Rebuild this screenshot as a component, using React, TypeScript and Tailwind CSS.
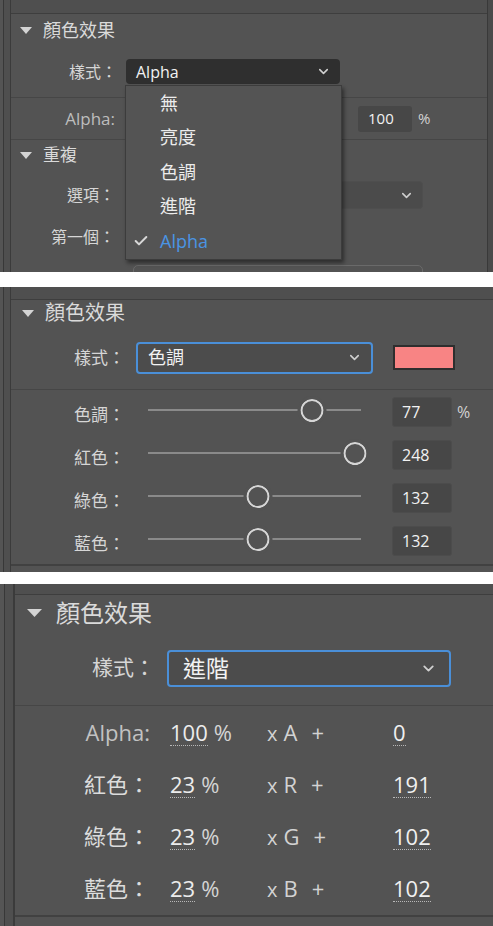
import { ChevronDown, Check } from 'lucide-react'

const font = "font-['Open_Sans','Noto_Sans_CJK_TC',sans-serif]"

function Triangle({ w = 12, h = 7 }: { w?: number; h?: number }) {
  return (
    <svg width={w} height={h} viewBox={`0 0 ${w} ${h}`} className="shrink-0">
      <polygon points={`0,0 ${w},0 ${w / 2},${h}`} fill="#d4d4d4" />
    </svg>
  )
}

function Slider({ value }: { value: number }) {
  return (
    <div className="relative h-[24px] w-[213px] shrink-0">
      <div className="absolute left-0 right-0 top-[9px] h-[2px] bg-[#8a8a8a]" />
      <div
        className="absolute top-[-1px] h-[23px] w-[23px] -translate-x-1/2 rounded-full border-[2.5px] border-[#d6d6d6] bg-[#535353] outline outline-[3px] outline-[#535353]"
        style={{ left: `${value}%` }}
      />
    </div>
  )
}

function SliderRow({ label, value, pct, unit }: { label: string; value: string; pct: number; unit?: string }) {
  return (
    <div className="flex h-[43px] items-center">
      <div className="w-[114px] pt-[6px] text-right text-[17px] text-[#d6d6d6]">{label}</div>
      <div className="ml-[23px]">
        <Slider value={pct} />
      </div>
      <div className="ml-[31px] flex h-[30px] w-[60px] items-center rounded-[3px] border border-[#4c4c4c] bg-[#474747] pl-[9px] text-[16px] font-medium text-[#f2f2f2]">
        {value}
      </div>
      {unit && <span className="ml-[5px] text-[16px] font-medium text-[#d2d2d2]">{unit}</span>}
    </div>
  )
}

function AdvRow({ label, pct, ch, value, dim }: { label: string; pct: string; ch: string; value: string; dim?: boolean }) {
  return (
    <div className="flex h-[52px] items-center text-[22px]">
      <div className={`w-[135px] text-right ${dim ? 'text-[#c2c2c2]' : 'text-[#dcdcdc]'}`}>{label}</div>
      <div className="ml-[20px] flex w-[97px] items-baseline gap-[6px] text-[#ececec]">
        <span className="border-b border-dotted border-[#b8b8b8] leading-[26px]">{pct}</span>
        <span className="text-[#d4d4d4]">%</span>
      </div>
      <div className="flex w-[126px] items-baseline text-[#d2d2d2]">
        <span className="text-[20px]">x</span>
        <span className="ml-[6px]">{ch}</span>
        <span className="ml-[14px]">+</span>
      </div>
      <span className="border-b border-dotted border-[#b8b8b8] leading-[26px] text-[#f0f0f0]">{value}</span>
    </div>
  )
}

export default function App() {
  return (
    <div className={`flex h-[926px] w-[493px] flex-col bg-white ${font}`}>
      {/* panel 1: alpha dropdown open */}
      <div className="relative flex h-[272px] shrink-0 overflow-hidden bg-[#4d4d4d]">
        <div className="w-[3px] bg-[#545454]" />
        <div className="w-px bg-[#383838]" />
        <div className="w-[6px] bg-[#4f4f4f]" />
        <div className="w-px bg-[#3b3b3b]" />
        <div className="flex flex-1 flex-col bg-[#535353]">
          <div className="h-[14px] shrink-0 border-b border-[#3e3e3e] bg-[#4f4f4f]" />
          <div className="flex h-[32px] shrink-0 items-center gap-[11px] pl-[9px]">
            <Triangle />
            <span className="text-[18px] text-[#dadada]">顏色效果</span>
          </div>
          <div className="flex h-[51px] shrink-0 items-center">
            <div className="w-[106px] text-right text-[16px] text-[#d6d6d6]">樣式：</div>
            <div className="ml-[9px] flex h-[25px] w-[214px] items-center justify-between rounded-[4px] bg-[#2f2f2f] pl-[10px] pr-[9px]">
              <span className="text-[16px] font-medium text-[#f2f2f2]">Alpha</span>
              <ChevronDown size={15} strokeWidth={2.5} className="text-[#d0d0d0]" />
            </div>
          </div>
          <div className="h-px shrink-0 bg-[#464646]" />
          <div className="flex h-[41px] shrink-0 items-center">
            <div className="w-[104px] text-right text-[17px] font-medium text-[#bdbdbd]">Alpha:</div>
            <div className="ml-[243px] flex h-[26px] w-[54px] items-center rounded-[3px] bg-[#474747] pl-[10px] text-[15px] font-medium text-[#f2f2f2]">
              100
            </div>
            <span className="ml-[6px] text-[15px] font-medium text-[#d2d2d2]">%</span>
          </div>
          <div className="h-px shrink-0 bg-[#464646]" />
          <div className="flex h-[30px] shrink-0 items-center gap-[11px] pl-[9px]">
            <Triangle />
            <span className="text-[17px] text-[#dadada]">重複</span>
          </div>
          <div className="flex h-[50px] shrink-0 items-center">
            <div className="w-[104px] text-right text-[16px] text-[#d6d6d6]">選項：</div>
            <div className="ml-[18px] flex h-[28px] w-[290px] items-center justify-end rounded-[4px] border border-[#4e4e4e] bg-[#4b4b4b] pr-[8px]">
              <ChevronDown size={15} strokeWidth={2.5} className="text-[#cfcfcf]" />
            </div>
          </div>
          <div className="flex h-[34px] shrink-0 items-center">
            <div className="w-[104px] text-right text-[16px] text-[#d6d6d6]">第一個：</div>
          </div>
          <div className="ml-[122px] mt-[11px] h-[28px] w-[290px] shrink-0 rounded-t-[5px] border border-[#6a6a6a]" />
        </div>
        <div className="w-px bg-[#393939]" />
        <div className="w-[5px] bg-[#4a4a4a]" />

        <div className="absolute left-[125px] top-[85px] flex w-[217px] flex-col border border-[#3c3c3c] bg-[#545454] shadow-[2px_3px_4px_rgba(0,0,0,0.45)]">
          {['無', '亮度', '色調', '進階'].map((item) => (
            <div key={item} className="flex h-[34.5px] items-center pl-[34px] text-[18px] text-[#ececec]">
              {item}
            </div>
          ))}
          <div className="flex h-[34.5px] items-center pl-[7px] text-[18px]">
            <Check size={16} strokeWidth={3} className="text-[#d8d8d8]" />
            <span className="ml-[11px] text-[#4a94e4]">Alpha</span>
          </div>
        </div>
      </div>

      <div className="h-[15px] shrink-0" />

      {/* panel 2: tint */}
      <div className="flex h-[285px] shrink-0 overflow-hidden bg-[#4d4d4d]">
        <div className="w-[3px] bg-[#545454]" />
        <div className="w-px bg-[#383838]" />
        <div className="w-[6px] bg-[#4f4f4f]" />
        <div className="w-px bg-[#3b3b3b]" />
        <div className="flex flex-1 flex-col bg-[#535353]">
          <div className="h-[13px] shrink-0 border-b border-[#3e3e3e] bg-[#4f4f4f]" />
          <div className="flex h-[26px] shrink-0 items-center gap-[11px] pl-[11px]">
            <Triangle />
            <span className="text-[20px] text-[#dadada]">顏色效果</span>
          </div>
          <div className="flex h-[63px] shrink-0 items-center">
            <div className="w-[114px] text-right text-[17px] text-[#d6d6d6]">樣式：</div>
            <div className="ml-[11px] flex h-[32px] w-[237px] items-center justify-between rounded-[4px] border-2 border-[#4a8fd8] bg-[#4c4c4c] pl-[10px] pr-[9px]">
              <span className="text-[18px] text-[#f2f2f2]">色調</span>
              <ChevronDown size={15} strokeWidth={2.5} className="text-[#d0d0d0]" />
            </div>
            <div className="ml-[20px] h-[25px] w-[62px] border-2 border-[#2e2e2e] bg-[#f88484]" />
          </div>
          <div className="h-px shrink-0 bg-[#464646]" />
          <SliderRow label="色調：" value="77" pct={77} unit="%" />
          <SliderRow label="紅色：" value="248" pct={97.3} />
          <SliderRow label="綠色：" value="132" pct={51.8} />
          <SliderRow label="藍色：" value="132" pct={51.8} />
          <div className="mt-[2px] h-[2px] shrink-0 bg-[#414141]" />
        </div>
      </div>

      <div className="h-[12px] shrink-0" />

      {/* panel 3: advanced */}
      <div className="flex h-[342px] shrink-0 overflow-hidden bg-[#4d4d4d]">
        <div className="w-[4px] bg-[#555555]" />
        <div className="w-px bg-[#383838]" />
        <div className="w-[8px] bg-[#4f4f4f]" />
        <div className="w-[2px] bg-[#3b3b3b]" />
        <div className="flex flex-1 flex-col bg-[#535353]">
          <div className="h-[11px] shrink-0 border-b border-[#3e3e3e] bg-[#4f4f4f]" />
          <div className="flex h-[36px] shrink-0 items-center gap-[14px] pl-[12px]">
            <Triangle w={15} h={8} />
            <span className="text-[24px] text-[#dadada]">顏色效果</span>
          </div>
          <div className="flex h-[74px] shrink-0 items-center">
            <div className="w-[140px] text-right text-[21px] text-[#d6d6d6]">樣式：</div>
            <div className="ml-[12px] flex h-[37px] w-[284px] items-center justify-between rounded-[4px] border-2 border-[#4a8fd8] bg-[#4c4c4c] pl-[14px] pr-[12px]">
              <span className="text-[23px] text-[#f2f2f2]">進階</span>
              <ChevronDown size={17} strokeWidth={2.5} className="text-[#d0d0d0]" />
            </div>
          </div>
          <div className="h-px shrink-0 bg-[#464646]" />
          <AdvRow label="Alpha:" pct="100" ch="A" value="0" dim />
          <AdvRow label="紅色：" pct="23" ch="R" value="191" />
          <AdvRow label="綠色：" pct="23" ch="G" value="102" />
          <AdvRow label="藍色：" pct="23" ch="B" value="102" />
          <div className="mt-[1px] h-[2px] shrink-0 bg-[#414141]" />
        </div>
      </div>
    </div>
  )
}
